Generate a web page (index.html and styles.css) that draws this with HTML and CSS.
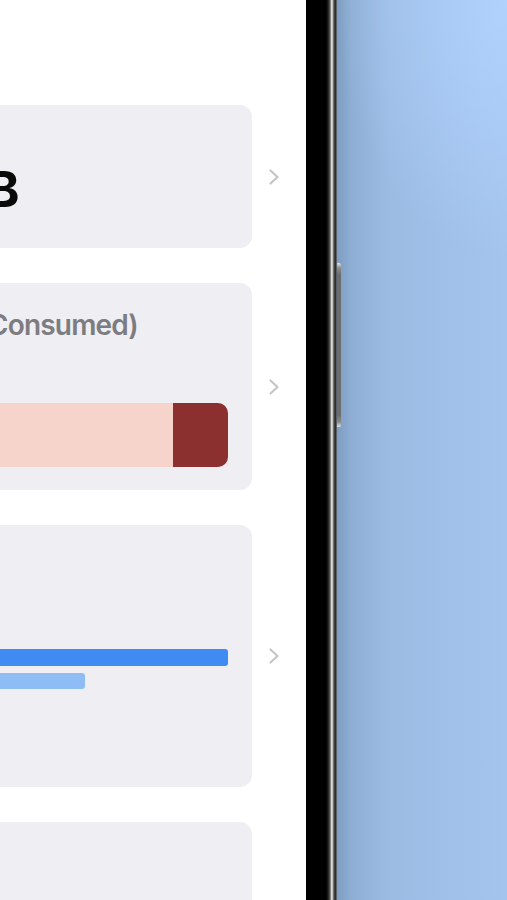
FILE: index.html
```html
<!DOCTYPE html>
<html lang="en">
<head>
<meta charset="utf-8">
<title>Usage</title>
<link rel="stylesheet" href="styles.css">
</head>
<body>
<div class="device">
  <main class="screen">
    <div class="list">
      <div class="row">
        <section class="card card-total">
          <div class="total-value"><span>1.8 GB</span></div>
        </section>
        <svg class="chevron" viewBox="0 0 12 18" width="12" height="18"><path d="M2.5 2.5 L9.5 9 L2.5 15.5"/></svg>
      </div>
      <div class="row">
        <section class="card card-consumed">
          <div class="card-title"><span>Storage (Consumed)</span></div>
          <div class="usage-bar">
            <div class="usage-free"></div>
            <div class="usage-used" style="width:55px"></div>
          </div>
        </section>
        <svg class="chevron" viewBox="0 0 12 18" width="12" height="18"><path d="M2.5 2.5 L9.5 9 L2.5 15.5"/></svg>
      </div>
      <div class="row">
        <section class="card card-compare">
          <div class="compare-bar compare-primary" style="width:328px"></div>
          <div class="compare-bar compare-secondary" style="width:185px"></div>
        </section>
        <svg class="chevron" viewBox="0 0 12 18" width="12" height="18"><path d="M2.5 2.5 L9.5 9 L2.5 15.5"/></svg>
      </div>
      <div class="row">
        <section class="card card-next"></section>
      </div>
    </div>
  </main>
  <div class="bezel"></div>
  <div class="wallpaper">
    <div class="side-button"></div>
  </div>
</div>
</body>
</html>
```

FILE: styles.css
```css
html, body {
  margin: 0;
  padding: 0;
  height: 100%;
  overflow: hidden;
}

body {
  font-family: Inter, "Noto Sans", "Liberation Sans", sans-serif;
  background: #ffffff;
}

.device {
  display: flex;
  height: 900px;
  width: 507px;
}

.screen {
  flex: none;
  width: 306px;
  height: 900px;
  background: #ffffff;
  overflow: hidden;
}

.list {
  margin-left: -120px;
  padding-top: 105px;
  display: flex;
  flex-direction: column;
  gap: 35px;
}

.row {
  display: flex;
  align-items: center;
}

.card {
  flex: none;
  width: 372px;
  box-sizing: border-box;
  background: #efeff3;
  border-radius: 12px;
  padding: 0 24px 0 20px;
}

.chevron {
  flex: none;
  margin-left: 16px;
  fill: none;
  stroke: #c5c5c9;
  stroke-width: 2.2;
  stroke-linecap: round;
  stroke-linejoin: round;
}

/* card 1 */
.card-total {
  height: 143px;
  padding-top: 59px;
}

.total-value {
  width: 119px;
  display: flex;
  justify-content: flex-end;
  font-size: 50px;
  line-height: 1;
  font-weight: 700;
  color: #0a0a0a;
  letter-spacing: -0.5px;
  white-space: nowrap;
}

.total-value span,
.card-title span {
  flex: none;
}

/* card 2 */
.card-consumed {
  height: 207px;
  padding-top: 28px;
}

.card-title {
  width: 238px;
  display: flex;
  justify-content: flex-end;
  font-size: 28px;
  line-height: 1;
  font-weight: 600;
  letter-spacing: -0.8px;
  color: #7c7c81;
  white-space: nowrap;
}

.usage-bar {
  margin-top: 64px;
  height: 64px;
  display: flex;
  border-radius: 10px;
  overflow: hidden;
}

.usage-free {
  flex: 1;
  background: #f7d4cb;
}

.usage-used {
  flex: none;
  background: #8c2f2f;
}

/* card 3 */
.card-compare {
  height: 262px;
  padding-top: 124px;
  display: flex;
  flex-direction: column;
  gap: 7px;
}

.compare-bar {
  border-radius: 3px;
}

.compare-primary {
  height: 17px;
  background: #3f8bf2;
}

.compare-secondary {
  height: 16px;
  background: #8ebdf6;
}

/* card 4 */
.card-next {
  height: 120px;
}

/* device frame */
.bezel {
  flex: none;
  width: 31px;
  height: 900px;
  background: linear-gradient(to right,
    #000000 0px,
    #000000 20px,
    #1a1a1a 22px,
    #5a5a58 24px,
    #d8d8d4 25.5px,
    #c2c2be 26.5px,
    #4a4a48 28px,
    #2e2e2e 29.5px,
    #6a7789 31px);
}

.wallpaper {
  flex: 1;
  height: 900px;
  position: relative;
  background:
    radial-gradient(ellipse 170px 260px at 100% 0%, rgba(178, 212, 255, 0.85), rgba(178, 212, 255, 0) 100%),
    linear-gradient(to right, #7f9cbf 0px, #8eaed4 14px, #9bbbe3 50px, #a0c0e9 110px, #a4c4ed 170px);
}

.side-button {
  position: absolute;
  left: 0;
  top: 263px;
  width: 4px;
  height: 164px;
  border-radius: 0 2px 2px 0;
  background: linear-gradient(to bottom, #e5e5e5 0px, #8a8a8a 5px, #6c6c6c 12px, #6c6c6c 152px, #8a8a8a 159px, #e5e5e5 164px);
}
```
